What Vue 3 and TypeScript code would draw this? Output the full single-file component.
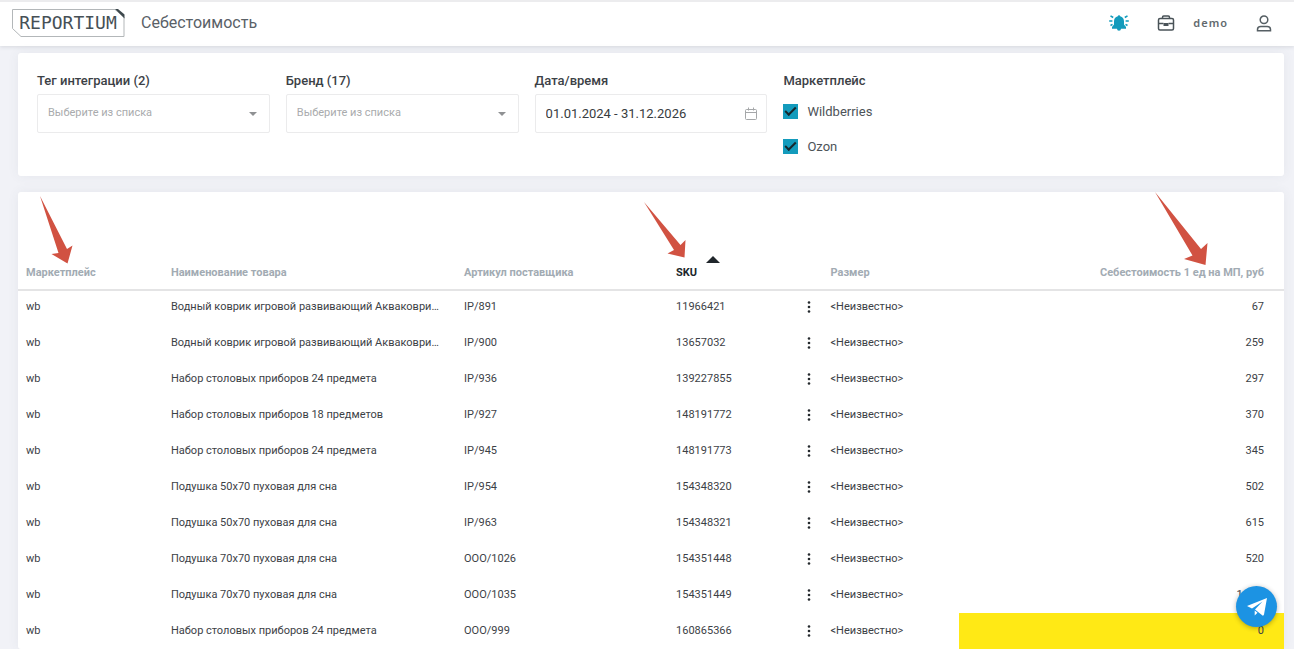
<script setup lang="ts">
import { ref } from 'vue'

interface Row {
  market: string
  name: string
  article: string
  sku: string
  size: string
  cost: string
  marked?: boolean
}

const unknown = '<Неизвестно>'
const mat = 'Водный коврик игровой развивающий Акваковри…'

const rows: Row[] = [
  { market: 'wb', name: mat, article: 'IP/891', sku: '11966421', size: unknown, cost: '67' },
  { market: 'wb', name: mat, article: 'IP/900', sku: '13657032', size: unknown, cost: '259' },
  { market: 'wb', name: 'Набор столовых приборов 24 предмета', article: 'IP/936', sku: '139227855', size: unknown, cost: '297' },
  { market: 'wb', name: 'Набор столовых приборов 18 предметов', article: 'IP/927', sku: '148191772', size: unknown, cost: '370' },
  { market: 'wb', name: 'Набор столовых приборов 24 предмета', article: 'IP/945', sku: '148191773', size: unknown, cost: '345' },
  { market: 'wb', name: 'Подушка 50х70 пуховая для сна', article: 'IP/954', sku: '154348320', size: unknown, cost: '502' },
  { market: 'wb', name: 'Подушка 50х70 пуховая для сна', article: 'IP/963', sku: '154348321', size: unknown, cost: '615' },
  { market: 'wb', name: 'Подушка 70х70 пуховая для сна', article: 'ООО/1026', sku: '154351448', size: unknown, cost: '520' },
  { market: 'wb', name: 'Подушка 70х70 пуховая для сна', article: 'ООО/1035', sku: '154351449', size: unknown, cost: '1 040' },
  { market: 'wb', name: 'Набор столовых приборов 24 предмета', article: 'ООО/999', sku: '160865366', size: unknown, cost: '0', marked: true },
]

const period = ref('01.01.2024 - 31.12.2026')
const wildberries = ref(true)
const ozon = ref(true)
</script>

<template>
  <div class="page">
    <header class="topbar">
      <a class="logo" href="#">
        <svg class="logo-frame" viewBox="0 0 114 30" aria-hidden="true">
          <path d="M1.5 1.5H104L113 9V28.5H10L1.5 20.5Z" fill="none" stroke="#b3b7b9" />
          <path d="M104 1H107L113.5 6.5V10.5Z" fill="#3d484d" />
        </svg>
        <span class="logo-text">REPORTIUM</span>
      </a>
      <h1>Себестоимость</h1>
      <nav class="tools">
        <button class="icon-btn bell" type="button" aria-label="Уведомления">
          <svg width="20" height="18" viewBox="0 0 20 18">
            <path d="M10 1.200a1.200 1.200 0 0 1 1.200 1.100C13.600 2.900 15 4.800 15 7.200v3.300l2 2.500v1.700H3v-1.700l2-2.500V7.200c0-2.400 1.400-4.300 3.800-4.900A1.200 1.200 0 0 1 10 1.200zM8 14.700h4a2 2 0 0 1-4 0z" fill="#139bbc" />
            <path d="M1.500 1.800l2.700 1.700M.2 7h3.200M1.500 11.500l2-1.200M18.500 1.800l-2.700 1.700M19.800 7h-3.200M18.500 11.500l-2-1.200" stroke="#139bbc" stroke-width="1.500" fill="none" />
          </svg>
        </button>
        <button class="icon-btn case" type="button" aria-label="Проекты">
          <svg width="18" height="16" viewBox="0 0 18 16" fill="none" stroke="#4a5358" stroke-width="1.500">
            <rect x="1.500" y="3.500" width="15" height="11.500" rx="1.500" />
            <path d="M5.500 3.500V2.200Q5.500 1 6.700 1h4.600q1.200 0 1.200 1.200v1.300M1.500 8.500h5M11.500 8.500h5" />
            <rect x="7" y="8.500" width="4" height="2" fill="#4a5358" stroke-width="1" />
          </svg>
        </button>
        <span class="account">demo</span>
        <button class="icon-btn user" type="button" aria-label="Профиль">
          <svg width="16" height="17" viewBox="0 0 16 17" fill="none" stroke="#565f64" stroke-width="1.500">
            <circle cx="8" cy="4.800" r="3.800" />
            <path d="M1.500 15.800v-1.300q0-3 3.300-3h6.400q3.300 0 3.300 3v1.300z" />
          </svg>
        </button>
      </nav>
    </header>

    <main>
      <section class="card filters">
        <div class="field">
          <label for="tag">Тег интеграции (2)</label>
          <div class="control">
            <select id="tag"><option>Выберите из списка</option></select>
            <svg class="caret" width="8" height="4" viewBox="0 0 8 4"><path d="M0 0H8L4 4Z" fill="#8f9193" /></svg>
          </div>
        </div>
        <div class="field">
          <label for="brand">Бренд (17)</label>
          <div class="control">
            <select id="brand"><option>Выберите из списка</option></select>
            <svg class="caret" width="8" height="4" viewBox="0 0 8 4"><path d="M0 0H8L4 4Z" fill="#8f9193" /></svg>
          </div>
        </div>
        <div class="field">
          <label for="period">Дата/время</label>
          <div class="control">
            <input id="period" v-model="period" type="text" />
            <svg class="calendar" width="12" height="13" viewBox="0 0 12 13" fill="none" stroke="#a5a7a9">
              <rect x=".5" y="2.500" width="11" height="10" rx="1" />
              <path d="M.5 5.500h11M3.500 .5v3M8.500 .5v3" />
            </svg>
          </div>
        </div>
        <fieldset class="field">
          <legend>Маркетплейс</legend>
          <div class="checks">
            <label><input v-model="wildberries" type="checkbox" /><span>Wildberries</span></label>
            <label><input v-model="ozon" type="checkbox" /><span>Ozon</span></label>
          </div>
        </fieldset>
      </section>

      <section class="card report">
        <table>
          <colgroup>
            <col class="c-market" /><col class="c-name" /><col class="c-article" />
            <col class="c-sku" /><col class="c-size" /><col />
          </colgroup>
          <thead>
            <tr>
              <th>Маркетплейс
                <svg class="pointer p-market" width="33" height="68" viewBox="0 0 33 68"><path d="M0 0L27 53L32.500 49.500L27.500 67.500L11.500 58L18.500 57Z" fill="#d15242" /></svg>
              </th>
              <th>Наименование товара</th>
              <th>Артикул поставщика</th>
              <th class="sorted" aria-sort="ascending">SKU
                <svg class="sort" width="14" height="7" viewBox="0 0 14 7"><path d="M0 7L7 0L14 7Z" fill="#20262b" /></svg>
                <svg class="pointer p-sku" width="42" height="56" viewBox="0 0 42 56"><path d="M0 0L36.500 43L41.500 38L40.500 55.500L23.500 51.500L30 48Z" fill="#d15242" /></svg>
              </th>
              <th>Размер</th>
              <th class="num">Себестоимость 1 ед на МП, руб
                <svg class="pointer p-cost" width="53" height="73" viewBox="0 0 53 73"><path d="M0 0L46 57L52.500 51L50.500 73L29 67L37.500 63.500Z" fill="#d15242" /></svg>
              </th>
            </tr>
          </thead>
          <tbody>
            <tr v-for="row in rows" :key="row.sku">
              <td>{{ row.market }}</td>
              <td>{{ row.name }}</td>
              <td>{{ row.article }}</td>
              <td>
                <div class="sku">
                  <span>{{ row.sku }}</span>
                  <button type="button" aria-label="Действия">
                    <svg width="4" height="12" viewBox="0 0 4 12" fill="#24292d">
                      <circle cx="2" cy="1.500" r="1.300" /><circle cx="2" cy="6" r="1.300" /><circle cx="2" cy="10.500" r="1.300" />
                    </svg>
                  </button>
                </div>
              </td>
              <td>{{ row.size }}</td>
              <td class="num" :class="{ marked: row.marked }">{{ row.cost }}</td>
            </tr>
          </tbody>
        </table>
      </section>
    </main>

    <a class="telegram" href="#" aria-label="Telegram">
      <svg width="20" height="18" viewBox="0 0 20 18"><path d="M20 0L0 8L5 10.500L15.500 3.500L8 11.500L15.500 17.500Q16.500 18 17 16.500ZM7.700 12.500V17.500L10.500 14.700Z" fill="#fff" /></svg>
    </a>
  </div>
</template>

<style>
body {
  background: #f1f2f7;
}
</style>

<style scoped>
* {
  box-sizing: border-box;
}

.page {
  font-family: Roboto, "Liberation Sans", sans-serif;
  color: #3c4146;
}

button {
  padding: 0;
  border: 0;
  background: none;
  cursor: pointer;
}

svg {
  display: block;
}

.topbar {
  display: flex;
  align-items: center;
  height: 46px;
  padding: 0 22px 2px 11px;
  border-top: 2px solid #ececee;
  background: #fff;
  box-shadow: 0 1px 4px rgba(60, 65, 80, 0.14);
}

.logo {
  display: grid;
  align-items: center;
  width: 114px;
  color: #465056;
  text-decoration: none;
}

.logo-frame,
.logo-text {
  grid-area: 1 / 1;
}

.logo-text {
  text-align: center;
  font: 18px/28px "DejaVu Sans Mono", "Liberation Mono", monospace;
}

h1 {
  margin: 0 0 0 16px;
  font-size: 16px;
  font-weight: 400;
  line-height: 24px;
  color: #5a6167;
}

.tools {
  display: flex;
  align-items: center;
  margin-left: auto;
}

.case {
  margin-left: 28px;
}

.account {
  margin: 0 28px 0 18px;
  font: 600 11px/16px "Noto Sans", sans-serif;
  letter-spacing: 1px;
  color: #62696e;
}

main {
  display: grid;
  gap: 16px;
  padding: 7px 10px 0 18px;
}

.card {
  min-width: 0;
  background: #fff;
  border-radius: 3px;
  box-shadow: 0 0 12px rgba(70, 80, 100, 0.07);
}

.filters {
  display: grid;
  grid-template-columns: repeat(5, 1fr);
  gap: 16px;
  padding: 20px 19px;
}

.field {
  min-width: 0;
  margin: 0;
  padding: 0;
  border: 0;
}

.field > label,
legend {
  display: block;
  padding: 0;
  font-size: 13px;
  font-weight: 500;
  line-height: 16px;
}

.control {
  display: grid;
  align-items: center;
  margin-top: 5px;
}

.control > * {
  grid-area: 1 / 1;
}

select,
.control input {
  appearance: none;
  width: 100%;
  height: 39px;
  padding: 0 10px;
  border: 1px solid #ebebec;
  border-radius: 2px;
  background: #fff;
  font-family: inherit;
}

select {
  padding-bottom: 2px;
  font-size: 11px;
  color: #a9abad;
}

.control input {
  font-size: 13px;
  color: #383c40;
}

.caret,
.calendar {
  justify-self: end;
  pointer-events: none;
}

.caret {
  margin-right: 13px;
}

.calendar {
  margin-right: 10px;
}

.checks {
  display: grid;
  gap: 16px;
  padding-top: 13px;
}

.checks label {
  display: flex;
  align-items: center;
  gap: 9px;
  font-size: 13px;
  line-height: 19px;
  color: #4d5358;
}

.checks input {
  appearance: none;
  display: grid;
  place-items: center;
  width: 15px;
  height: 15px;
  margin: 0;
  background: #139bbc;
}

.checks input:checked::before {
  content: "";
  width: 9px;
  height: 4px;
  margin-bottom: 3px;
  border: solid #16272d;
  border-width: 0 0 2px 2px;
  transform: rotate(-45deg);
}

table {
  width: 100%;
  table-layout: fixed;
  border-collapse: separate;
  border-spacing: 0;
  font-size: 11px;
  line-height: 16px;
}

.c-market { width: 11.45%; }
.c-name { width: 23.15%; }
.c-article { width: 16.75%; }
.c-sku { width: 12.2%; }
.c-size { width: 10.8%; }

th,
td {
  padding: 0 8px;
  text-align: left;
  white-space: nowrap;
}

th {
  position: relative;
  height: 97px;
  padding-bottom: 8px;
  vertical-align: bottom;
  font-weight: 700;
  color: #a2abb3;
  box-shadow: 0 2px 0 #e4e4e5;
}

th.sorted {
  color: #20262b;
}

td {
  height: 36px;
}

.num {
  padding-right: 20px;
  text-align: right;
}

.marked {
  background: #ffe915;
}

.sku {
  display: flex;
  justify-content: space-between;
  align-items: center;
  padding-right: 4px;
}

.sort,
.pointer {
  position: absolute;
}

.sort {
  left: 38px;
  top: 64px;
}

.p-market {
  left: 22px;
  top: 4px;
}

.p-sku {
  left: -24px;
  top: 10px;
}

.p-cost {
  right: 76px;
  top: 0;
}

.telegram {
  position: fixed;
  right: 17px;
  bottom: 22px;
  display: grid;
  place-items: center;
  width: 41px;
  height: 41px;
  border-radius: 50%;
  background: #1c93e3;
  box-shadow: 0 1px 5px rgba(0, 0, 0, 0.3);
}
</style>
